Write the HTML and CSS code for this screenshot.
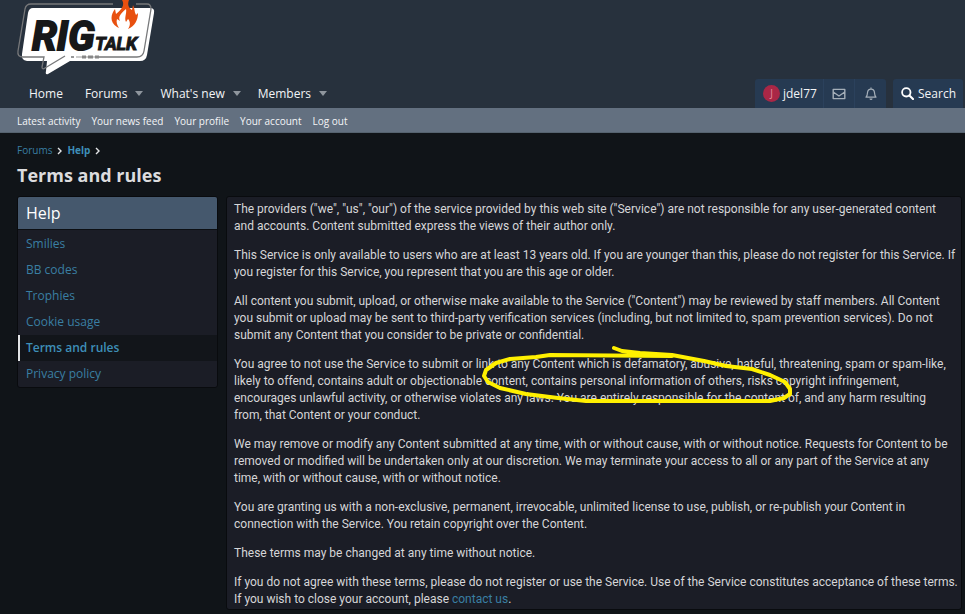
FILE: index.html
```html
<!DOCTYPE html>
<html lang="en">
<head>
<meta charset="utf-8">
<title>Terms and rules</title>
<link rel="stylesheet" href="styles.css">
</head>
<body>
<header class="header">
  <a class="logo" href="#" aria-label="Rig Talk">
    <svg width="160" height="79" viewBox="0 0 160 79">
      <path d="M33 8H150Q155 8 154 13L147 55Q146 61 140 61H70L48 74Q45 75 46 71L47 61H27Q21 60 22 54L28 13Q29 8 33 8Z" fill="#fff"/>
      <path d="M113 4H31Q26 4 25 9L18 51Q17 57 23 57H44L42 67Q42 70 45 68L65 56M136 4H147Q151 4 151 9L144 51Q143 57 137 57H99M71 57H74" fill="none" stroke="#77787a" stroke-width="1.3"/>
      <path d="M76 57H99" stroke="#999" stroke-width="1"/>
      <path d="M82 57H86M88 57H93M95 57H99" stroke="#888" stroke-width="3"/>
      <text class="logo-rig" x="32" y="50">RIG</text>
      <text class="logo-talk" x="95" y="50">TALK</text>
      <path d="M117 27C109 22 111 14 115 9L116 14C122 9 125 5 122 0H129C127 5 129 8 132 10L133 5C135 8 134 12 136 15L138 13C138 20 135 26 128 29C131 25 130 21 128 19L126 22C124 18 127 13 126 9C120 14 118 17 120 21L117 19C116 22 117 25 119 28Z" fill="#e8500f"/>
    </svg>
  </a>
  <div class="nav">
    <nav class="nav-list">
      <a href="#">Home</a>
      <a class="has-menu" href="#">Forums</a>
      <a class="has-menu" href="#">What's new</a>
      <a class="has-menu" href="#">Members</a>
    </nav>
    <div class="nav-group">
      <a class="user" href="#"><span class="avatar">J</span>jdel77</a>
      <a class="icon-link" href="#" aria-label="Inbox">
        <svg width="14" height="12" viewBox="0 0 14 12"><path d="M1.2 1.4H12.8V10.6H1.2ZM1.2 4L7 8L12.8 4" fill="none" stroke="#a5afb9" stroke-width="1.4" stroke-linejoin="round"/></svg>
      </a>
      <a class="icon-link" href="#" aria-label="Alerts">
        <svg width="12" height="14" viewBox="0 0 12 14"><path d="M6 0.5V2M1 10.2C2.4 8.8 2.4 7.8 2.5 5.6C2.7 3.3 4 2.1 6 2.1S9.3 3.3 9.5 5.6C9.6 7.8 9.6 8.8 11 10.2Z" fill="none" stroke="#a5afb9" stroke-width="1.2" stroke-linejoin="round"/><path d="M4.4 11.4H7.6Q7.4 13 6 13T4.4 11.4Z" fill="#a5afb9"/></svg>
      </a>
    </div>
    <button class="search" type="button">
      <svg width="13" height="13" viewBox="0 0 13 13"><circle cx="5.3" cy="5.3" r="4.2" fill="none" stroke="#fff" stroke-width="1.8"/><path d="M8.4 8.4L12 12" stroke="#fff" stroke-width="2.1" stroke-linecap="round"/></svg>
      Search
    </button>
  </div>
</header>
<nav class="subnav">
  <a href="#">Latest activity</a>
  <a href="#">Your news feed</a>
  <a href="#">Your profile</a>
  <a href="#">Your account</a>
  <a href="#">Log out</a>
</nav>
<div class="page">
  <nav class="crumbs">
    <a href="#">Forums</a><svg width="5" height="8" viewBox="0 0 5 8"><path d="M1 1L4 4L1 7" /></svg>
    <a class="current" href="#">Help</a><svg width="5" height="8" viewBox="0 0 5 8"><path d="M1 1L4 4L1 7" /></svg>
  </nav>
  <h1>Terms and rules</h1>
  <div class="columns">
    <aside class="block side">
      <h2>Help</h2>
      <a href="#">Smilies</a>
      <a href="#">BB codes</a>
      <a href="#">Trophies</a>
      <a href="#">Cookie usage</a>
      <a class="selected" href="#">Terms and rules</a>
      <a href="#">Privacy policy</a>
    </aside>
    <main class="block content">
      <p>The providers ("we", "us", "our") of the service provided by this web site ("Service") are not responsible for any user-generated content<br>and accounts. Content submitted express the views of their author only.</p>
      <p>This Service is only available to users who are at least 13 years old. If you are younger than this, please do not register for this Service. If<br>you register for this Service, you represent that you are this age or older.</p>
      <p>All content you submit, upload, or otherwise make available to the Service ("Content") may be reviewed by staff members. All Content<br>you submit or upload may be sent to third-party verification services (including, but not limited to, spam prevention services). Do not<br>submit any Content that you consider to be private or confidential.</p>
      <p class="marked">You agree to not use the Service to submit or link to any Content which is defamatory, abusive, hateful, threatening, spam or spam-like,<br>likely to offend, contains adult or objectionable content, contains personal information of others, risks copyright infringement,<br>encourages unlawful activity, or otherwise violates any laws. You are entirely responsible for the content of, and any harm resulting<br>from, that Content or your conduct.
        <svg class="scribble" width="320" height="64" viewBox="0 0 320 64"><path d="M134 8L142 11L160 13L192 15L224 21L246 26L272 29L290 35L305 42L310 49V54L304 58L290 61H106L78 58L46 54L20 48L8 42L4 36L6 30L16 23L30 19L56 17L70 15L192 16"/></svg>
      </p>
      <p>We may remove or modify any Content submitted at any time, with or without cause, with or without notice. Requests for Content to be<br>removed or modified will be undertaken only at our discretion. We may terminate your access to all or any part of the Service at any<br>time, with or without cause, with or without notice.</p>
      <p>You are granting us with a non-exclusive, permanent, irrevocable, unlimited license to use, publish, or re-publish your Content in<br>connection with the Service. You retain copyright over the Content.</p>
      <p>These terms may be changed at any time without notice.</p>
      <p>If you do not agree with these terms, please do not register or use the Service. Use of the Service constitutes acceptance of these terms.<br>If you wish to close your account, please <a href="#">contact us</a>.</p>
    </main>
  </div>
</div>
</body>
</html>
```
FILE: styles.css
```css
* { box-sizing: border-box; }
body {
  margin: 0;
  background: #101418;
  color: #d6d6d8;
  font: 12px/17px "Open Sans", "Noto Sans", sans-serif;
}
a { color: #3a7fa3; text-decoration: none; }
h1, h2, p { margin: 0; }

.header { background: #27313d; }
.logo { display: block; height: 79px; }
.logo svg { display: block; }
.logo-rig, .logo-talk {
  font-family: "Liberation Sans Narrow", "Roboto", sans-serif;
  font-weight: 700;
  font-style: italic;
  fill: #171819;
  stroke: #171819;
}
.logo-rig { font-size: 40px; stroke-width: 2px; }
.logo-talk { font-size: 18px; stroke-width: 1px; }

.nav { display: flex; height: 29px; padding: 0 2px 0 29px; }
.nav a, .search { color: #f2f4f6; }
.nav-list { display: flex; flex: 1; align-items: center; gap: 22px; }
.nav-list a { display: flex; align-items: center; gap: 8px; }
.nav-list .has-menu { margin-right: -5px; }
.has-menu::after {
  content: "";
  border: 4px solid transparent;
  border-top: 5px solid #8f969e;
  border-bottom: 0;
}
.nav-group { display: flex; margin-right: 7px; background: #263a52; border-radius: 3px 3px 0 0; }
.nav-group a { display: flex; align-items: center; }
.user { gap: 3px; padding: 0 3px 0 8px; }
.user, .icon-link:nth-child(2) { border-right: 1px solid #2b415c; }
.user { min-width: 69px; }
.icon-link { width: 31px; justify-content: center; }
.avatar {
  width: 17px;
  height: 17px;
  border-radius: 50%;
  background: #a92746;
  color: #e38a9c;
  font-size: 10px;
  text-align: center;
}
.search {
  display: flex;
  align-items: center;
  gap: 4px;
  padding: 0 7px 0 8px;
  border: 0;
  border-radius: 3px 3px 0 0;
  background: #263a52;
  font: inherit;
}

.subnav {
  display: flex;
  gap: 11px;
  padding: 5px 17px 2px;
  border-bottom: 1px solid #56636f;
  background: #637080;
  font-size: 10px;
}
.subnav a { color: #f4f5f7; }

.page { padding: 9px 3px 4px 17px; }
.crumbs { display: flex; align-items: center; gap: 5px; font-size: 10px; }
.crumbs .current { font-weight: 700; color: #3e8fb8; }
.crumbs path { fill: none; stroke: #e4e6e8; stroke-width: 1.4; }
h1 { margin: 3px 0 8px; font-size: 18px; line-height: 26px; color: #dcdcde; }

.columns { display: grid; grid-template-columns: 201px minmax(0, 1fr); gap: 8px; align-items: start; }
.block { border: 1px solid #090b0e; border-radius: 3px; background: #1b1d26; }
.side { display: flex; flex-direction: column; }
.side h2 {
  margin-bottom: 1px;
  padding: 4px 8px;
  border-bottom: 1px solid #0c0f13;
  border-radius: 2px 2px 0 0;
  background: #45586d;
  color: #fff;
  font-size: 16px;
  font-weight: 400;
  line-height: 24px;
}
.side a { padding: 5px 8px; line-height: 16px; }
.side .selected {
  padding-left: 6px;
  border-left: 2px solid #e2e4e6;
  background: #12151a;
  color: #3e8fb8;
  font-weight: 600;
}
.content { display: grid; gap: 12px; padding: 4px 1px 1px 7px; font-family: Roboto, sans-serif; }
.marked { position: relative; }
.scribble { position: absolute; left: 246px; top: -16px; overflow: visible; pointer-events: none; }
.scribble path { fill: none; stroke: #fff000; stroke-width: 4; stroke-linejoin: round; stroke-linecap: round; }
```
